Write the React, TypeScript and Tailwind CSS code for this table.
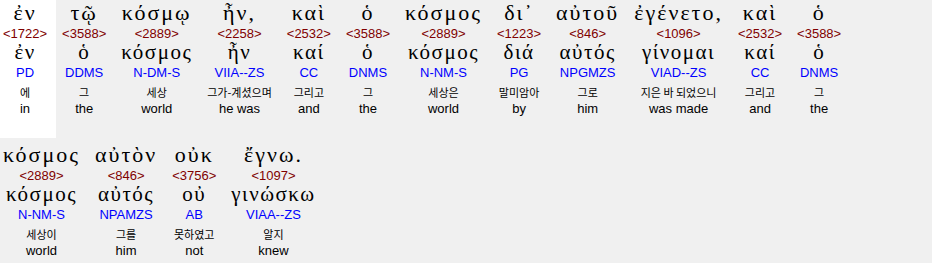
import React from "react";

type W = { g: string; n: string; l: string; p: string; k: string; e: string };

const words: W[] = [
  { g: "ἐν", n: "1722", l: "ἐν", p: "PD", k: "에", e: "in" },
  { g: "τῷ", n: "3588", l: "ὁ", p: "DDMS", k: "그", e: "the" },
  { g: "κόσμῳ", n: "2889", l: "κόσμος", p: "N-DM-S", k: "세상", e: "world" },
  { g: "ἦν,", n: "2258", l: "ἦν", p: "VIIA--ZS", k: "그가-계셨으며", e: "he was" },
  { g: "καὶ", n: "2532", l: "καί", p: "CC", k: "그리고", e: "and" },
  { g: "ὁ", n: "3588", l: "ὁ", p: "DNMS", k: "그", e: "the" },
  { g: "κόσμος", n: "2889", l: "κόσμος", p: "N-NM-S", k: "세상은", e: "world" },
  { g: "δι᾽", n: "1223", l: "διά", p: "PG", k: "말미암아", e: "by" },
  { g: "αὐτοῦ", n: "846", l: "αὐτός", p: "NPGMZS", k: "그로", e: "him" },
  { g: "ἐγένετο,", n: "1096", l: "γίνομαι", p: "VIAD--ZS", k: "지은 바 되었으니", e: "was made" },
  { g: "καὶ", n: "2532", l: "καί", p: "CC", k: "그리고", e: "and" },
  { g: "ὁ", n: "3588", l: "ὁ", p: "DNMS", k: "그", e: "the" },
  { g: "κόσμος", n: "2889", l: "κόσμος", p: "N-NM-S", k: "세상이", e: "world" },
  { g: "αὐτὸν", n: "846", l: "αὐτός", p: "NPAMZS", k: "그를", e: "him" },
  { g: "οὐκ", n: "3756", l: "οὐ", p: "AB", k: "못하였고", e: "not" },
  { g: "ἔγνω.", n: "1097", l: "γινώσκω", p: "VIAA--ZS", k: "알지", e: "knew" },
];

function Cell({ w, first }: { w: W; first: boolean }) {
  return (
    <div
      className={`flex flex-col items-center h-[138px] pl-[6px] pr-[9px] whitespace-nowrap ${first ? "bg-white" : ""}`}
    >
      <div className="h-[25px] leading-[25px] text-[22px] tracking-[2px] text-black font-['Liberation_Serif',serif]">
        {w.g}
      </div>
      <div className="h-[17px] leading-[17px] text-[13px] text-[#800000] font-['Liberation_Sans',Arial,sans-serif]">
        &lt;{w.n}&gt;
      </div>
      <div className="h-[20px] leading-[20px] text-[21px] tracking-[1.5px] text-black font-['Liberation_Serif',serif]">
        {w.l}
      </div>
      <div className="h-[22px] leading-[22px] text-[13px] text-[#0000ff] font-['Liberation_Sans',Arial,sans-serif]">
        {w.p}
      </div>
      <div className="h-[16px] leading-[16px] text-[11px] text-black font-['Noto_Sans_CJK_KR',sans-serif]">
        {w.k}
      </div>
      <div className="h-[18px] leading-[18px] text-[13px] text-black font-['Liberation_Sans',Arial,sans-serif]">
        {w.e}
      </div>
    </div>
  );
}

export default function App() {
  return (
    <div className="w-[932px] h-[263px] bg-[#f0f0f0] overflow-hidden">
      <div className="-ml-[3px] w-[900px] flex flex-wrap gap-y-[4px]">
        {words.map((w, i) => (
          <Cell key={i} w={w} first={i === 0} />
        ))}
      </div>
    </div>
  );
}
